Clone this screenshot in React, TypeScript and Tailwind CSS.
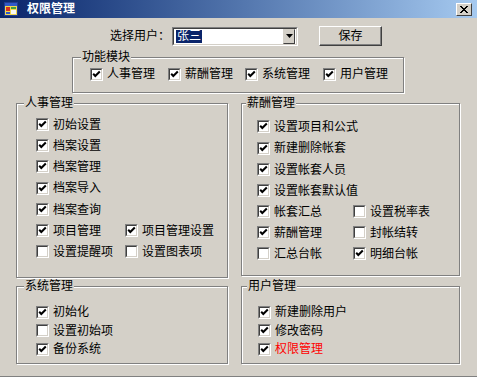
import React from "react";

const FONT = "font-['Liberation_Sans','Noto_Sans_CJK_SC',sans-serif]";

function Check({ checked }: { checked: boolean }) {
  return (
    <span className="flex h-[13px] w-[13px] shrink-0 border border-t-[#808080] border-l-[#808080] border-r-white border-b-white">
      <span className="flex h-full w-full items-center justify-center border border-t-[#404040] border-l-[#404040] border-r-[#d4d0c8] border-b-[#d4d0c8] bg-white">
        {checked ? (
          <svg width="9" height="9" viewBox="0 0 9 9">
            <polyline
              points="1.2,3.8 3.3,6 7.8,1.5"
              fill="none"
              stroke="#000"
              strokeWidth="2"
            />
          </svg>
        ) : null}
      </span>
    </span>
  );
}

function Item({
  label,
  checked,
  red,
  className = "h-[21px]",
}: {
  label: string;
  checked: boolean;
  red?: boolean;
  className?: string;
}) {
  return (
    <label className={`flex items-center gap-[4px] whitespace-nowrap ${className}`}>
      <Check checked={checked} />
      <span className={red ? "text-[#ff0000]" : "text-black"}>{label}</span>
    </label>
  );
}

// Win2000 style etched group box
const etched =
  "border border-[#808080] shadow-[inset_1px_1px_0_#fff,1px_1px_0_#fff]";

function Group({
  title,
  className,
  legendClass,
  children,
}: {
  title: string;
  className: string;
  legendClass: string;
  children: React.ReactNode;
}) {
  return (
    <fieldset className={`${etched} ${className}`}>
      <legend className={`bg-[#d4d0c8] px-[1px] leading-[14px] ${legendClass}`}>
        {title}
      </legend>
      {children}
    </fieldset>
  );
}

export default function App() {
  return (
    <div
      className={`flex h-[377px] w-[477px] flex-col bg-[#d4d0c8] text-[12px] text-black ${FONT}`}
    >
      {/* title bar */}
      <div className="flex h-[18px] shrink-0 items-center bg-linear-to-r from-[#0a246a] to-[#a6caf0] pl-[4px] pr-[5px]">
        <svg width="14" height="14" viewBox="0 0 14 14">
          <rect x="0.5" y="0.5" width="13" height="13" fill="#f0d850" stroke="#203c90" />
          <rect x="1" y="1" width="12" height="3" fill="#3058c8" />
          <rect x="2" y="5" width="4" height="4" fill="#d83020" />
          <rect x="7" y="5" width="5" height="2" fill="#40a040" />
          <rect x="7" y="8" width="5" height="4" fill="#f8f8f8" />
          <rect x="2" y="10" width="4" height="2" fill="#3058c8" />
        </svg>
        <span className="ml-[9px] text-[12px] font-bold leading-none text-white">
          权限管理
        </span>
        <button
          type="button"
          className="ml-auto flex h-[13px] w-[16px] items-center justify-center border border-t-white border-l-white border-r-[#404040] border-b-[#404040] bg-[#d4d0c8]"
        >
          <svg width="8" height="7" viewBox="0 0 8 7">
            <path d="M0 0L7 7M1 0L8 7M7 0L0 7M8 0L1 7" stroke="#000" strokeWidth="1" />
          </svg>
        </button>
      </div>

      {/* user selector */}
      <div className="mt-[8px] flex h-[20px] items-center">
        <span className="ml-[110px] w-[62px] whitespace-nowrap">选择用户：</span>
        <div className="flex h-[19px] w-[126px] border border-t-[#808080] border-l-[#808080] border-r-white border-b-white">
          <div className="flex h-full w-full items-center border border-t-[#404040] border-l-[#404040] border-r-[#d4d0c8] border-b-[#d4d0c8] bg-white pl-[2px] pr-px">
            <span className="bg-[#0a246a] px-px leading-[13px] text-white">张三</span>
            <span className="ml-auto flex h-[15px] w-[12px] items-center justify-center border border-t-[#d4d0c8] border-l-[#d4d0c8] border-r-[#404040] border-b-[#404040] bg-[#d4d0c8]">
              <svg width="7" height="4" viewBox="0 0 7 4">
                <path d="M0 0H7L3.5 4Z" fill="#000" />
              </svg>
            </span>
          </div>
        </div>
        <button
          type="button"
          className="ml-[21px] flex h-[20px] w-[63px] items-center justify-center border border-t-white border-l-white border-r-[#404040] border-b-[#404040] shadow-[inset_-1px_-1px_0_#808080]"
        >
          保存
        </button>
      </div>

      {/* module switches */}
      <Group
        title="功能模块"
        className="ml-[72px] mt-[4px] h-[43px] w-[332px] shrink-0"
        legendClass="ml-[8px]"
      >
        <div className="flex pl-[17px] pt-[2px]">
          <Item label="人事管理" checked className="h-[16px] w-[78px]" />
          <Item label="薪酬管理" checked className="h-[16px] w-[77px]" />
          <Item label="系统管理" checked className="h-[16px] w-[78px]" />
          <Item label="用户管理" checked className="h-[16px]" />
        </div>
      </Group>

      <div className="ml-[16px] mt-[3px] grid grid-cols-[212px_219px] grid-rows-[182px_85px] gap-x-[13px] gap-y-[1px]">
        <Group title="人事管理" className="h-[182px]" legendClass="ml-[7px]">
          <div className="grid grid-cols-[89px_auto] pl-[19px] pt-[4px]">
            <Item label="初始设置" checked className="col-span-2 h-[21px]" />
            <Item label="档案设置" checked className="col-span-2 h-[21px]" />
            <Item label="档案管理" checked className="col-span-2 h-[21px]" />
            <Item label="档案导入" checked className="col-span-2 h-[22px]" />
            <Item label="档案查询" checked className="col-span-2 h-[21px]" />
            <Item label="项目管理" checked />
            <Item label="项目管理设置" checked />
            <Item label="设置提醒项" checked={false} />
            <Item label="设置图表项" checked={false} />
          </div>
        </Group>

        <Group title="薪酬管理" className="h-[180px]" legendClass="ml-[4px]">
          <div className="grid grid-cols-[96px_auto] pl-[15px] pt-[6px]">
            <Item label="设置项目和公式" checked className="col-span-2 h-[21px]" />
            <Item label="新建删除帐套" checked className="col-span-2 h-[22px]" />
            <Item label="设置帐套人员" checked className="col-span-2 h-[21px]" />
            <Item label="设置帐套默认值" checked className="col-span-2 h-[21px]" />
            <Item label="帐套汇总" checked />
            <Item label="设置税率表" checked={false} />
            <Item label="薪酬管理" checked />
            <Item label="封帐结转" checked={false} />
            <Item label="汇总台帐" checked={false} />
            <Item label="明细台帐" checked />
          </div>
        </Group>

        <Group title="系统管理" className="h-[85px]" legendClass="ml-[7px]">
          <div className="flex flex-col pl-[19px] pt-[10px]">
            <Item label="初始化" checked className="h-[18px]" />
            <Item label="设置初始项" checked={false} className="h-[19px]" />
            <Item label="备份系统" checked className="h-[18px]" />
          </div>
        </Group>

        <Group title="用户管理" className="h-[85px]" legendClass="ml-[5px]">
          <div className="flex flex-col pl-[16px] pt-[10px]">
            <Item label="新建删除用户" checked className="h-[18px]" />
            <Item label="修改密码" checked className="h-[19px]" />
            <Item label="权限管理" checked red className="h-[18px]" />
          </div>
        </Group>
      </div>

      <div className="mt-auto h-[2px] border-b border-[#808080]" />
    </div>
  );
}
